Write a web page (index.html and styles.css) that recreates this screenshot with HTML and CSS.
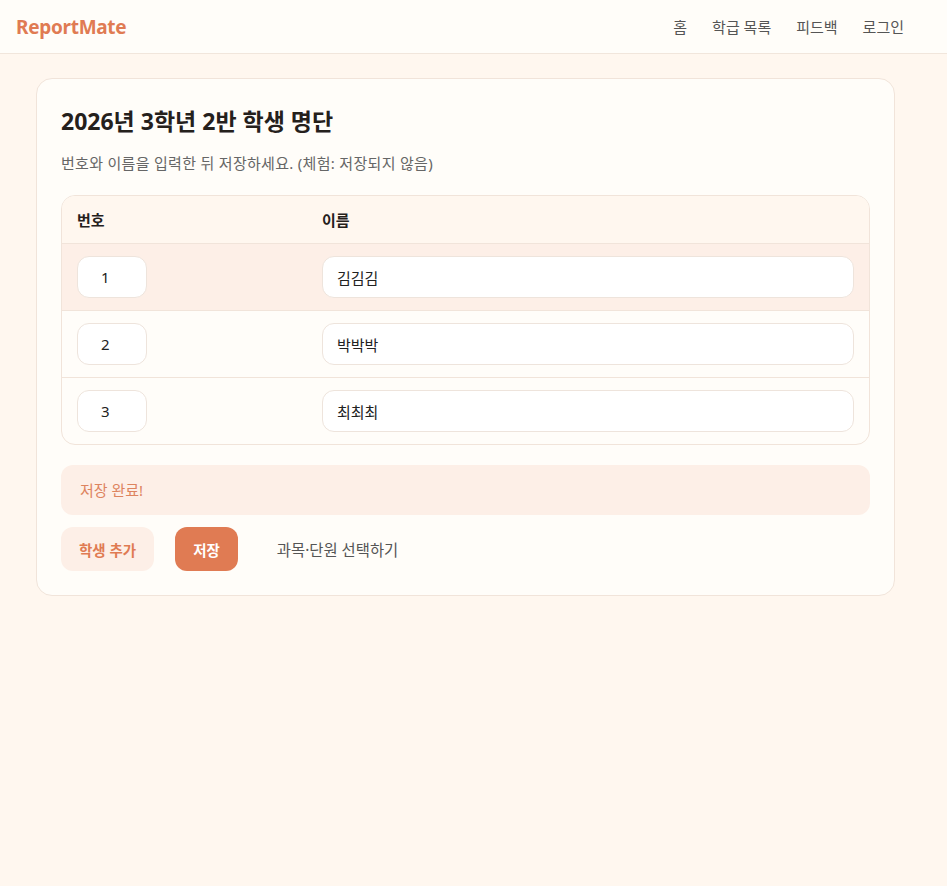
FILE: index.html
```html
<!DOCTYPE html>
<html lang="ko">
<head>
  <meta charset="utf-8">
  <title>ReportMate - 학생 명단</title>
  <link rel="stylesheet" href="styles.css">
</head>
<body>
  <header class="topbar">
    <a class="logo" href="#">ReportMate</a>
    <nav class="nav">
      <a href="#">홈</a>
      <a href="#">학급 목록</a>
      <a href="#">피드백</a>
      <a href="#">로그인</a>
    </nav>
  </header>

  <main class="page">
    <section class="card">
      <h1>2026년 3학년 2반 학생 명단</h1>
      <p class="desc">번호와 이름을 입력한 뒤 저장하세요. (체험: 저장되지 않음)</p>

      <div class="table-wrap">
        <table class="roster">
          <thead>
            <tr>
              <th class="col-no">번호</th>
              <th>이름</th>
            </tr>
          </thead>
          <tbody>
            <tr class="active">
              <td><input class="input no" type="text" value="1"></td>
              <td><input class="input name" type="text" value="김김김"></td>
            </tr>
            <tr>
              <td><input class="input no" type="text" value="2"></td>
              <td><input class="input name" type="text" value="박박박"></td>
            </tr>
            <tr>
              <td><input class="input no" type="text" value="3"></td>
              <td><input class="input name" type="text" value="최최최"></td>
            </tr>
          </tbody>
        </table>
      </div>

      <div class="notice">저장 완료!</div>

      <div class="actions">
        <button class="btn btn-soft">학생 추가</button>
        <button class="btn btn-primary">저장</button>
        <a class="btn btn-link" href="#">과목·단원 선택하기</a>
      </div>
    </section>
  </main>
</body>
</html>
```

FILE: styles.css
```css
body {
  margin: 0;
  background: #fff7ef;
  font-family: "Noto Sans", "Noto Sans CJK KR", sans-serif;
  color: #2a2420;
}

a {
  text-decoration: none;
}

.topbar {
  display: flex;
  align-items: center;
  justify-content: space-between;
  height: 53px;
  padding: 0 43px 0 16px;
  background: #fffdf9;
  border-bottom: 1px solid #f1e6dc;
}

.logo {
  color: #e07b53;
  font-size: 19px;
  font-weight: 700;
  letter-spacing: -0.3px;
}

.nav {
  display: flex;
  gap: 25px;
}

.nav a {
  color: #555;
  font-size: 15px;
}

.page {
  padding: 24px 36px;
  max-width: 859px;
}

.card {
  background: #fffdf9;
  border: 1px solid #f1e4da;
  border-radius: 16px;
  padding: 24px;
}

.card h1 {
  margin: 2px 0 0;
  font-size: 23px;
  line-height: 32px;
  font-weight: 700;
  color: #25201c;
}

.desc {
  margin: 15px 0 21px;
  font-size: 15px;
  letter-spacing: 0.3px;
  line-height: 22px;
  color: #666;
}

.table-wrap {
  border: 1px solid #f1e4da;
  border-radius: 14px;
  overflow: hidden;
}

.roster {
  width: 100%;
  border-collapse: collapse;
}

.roster th {
  text-align: left;
  height: 47px;
  padding: 0 15px;
  background: #fff7ef;
  font-size: 15px;
  font-weight: 700;
  color: #25201c;
  border-bottom: 1px solid #f1e4da;
}

.roster .col-no {
  width: 215px;
}

.roster td {
  padding: 12px 15px;
  border-bottom: 1px solid #f1e4da;
}

.roster tbody tr:last-child td {
  border-bottom: none;
}

.roster tr.active td {
  background: #fdefe7;
}

.input {
  box-sizing: border-box;
  height: 42px;
  padding: 0 14px;
  border: 1px solid #eee4dc;
  border-radius: 12px;
  background: #fff;
  font-family: inherit;
  font-size: 15px;
  color: #222;
  outline: none;
}

.input.no {
  width: 70px;
  padding-left: 23px;
}

.input.name {
  width: 100%;
}

.notice {
  margin-top: 20px;
  padding: 15px 19px;
  border-radius: 12px;
  background: #fdefe7;
  color: #dd845f;
  font-size: 15px;
  line-height: 20px;
}

.actions {
  display: flex;
  align-items: center;
  gap: 21px;
  margin-top: 12px;
}

.btn {
  height: 44px;
  padding: 0 18px;
  border: none;
  border-radius: 12px;
  font-family: inherit;
  font-size: 14.5px;
  font-weight: 700;
  display: inline-flex;
  align-items: center;
}

.btn-soft {
  background: #fdefe7;
  color: #e07b53;
}

.btn-primary {
  background: #e07b53;
  color: #fff;
}

.btn-link {
  background: none;
  color: #555;
  font-size: 15.4px;
  font-weight: 400;
}
```
